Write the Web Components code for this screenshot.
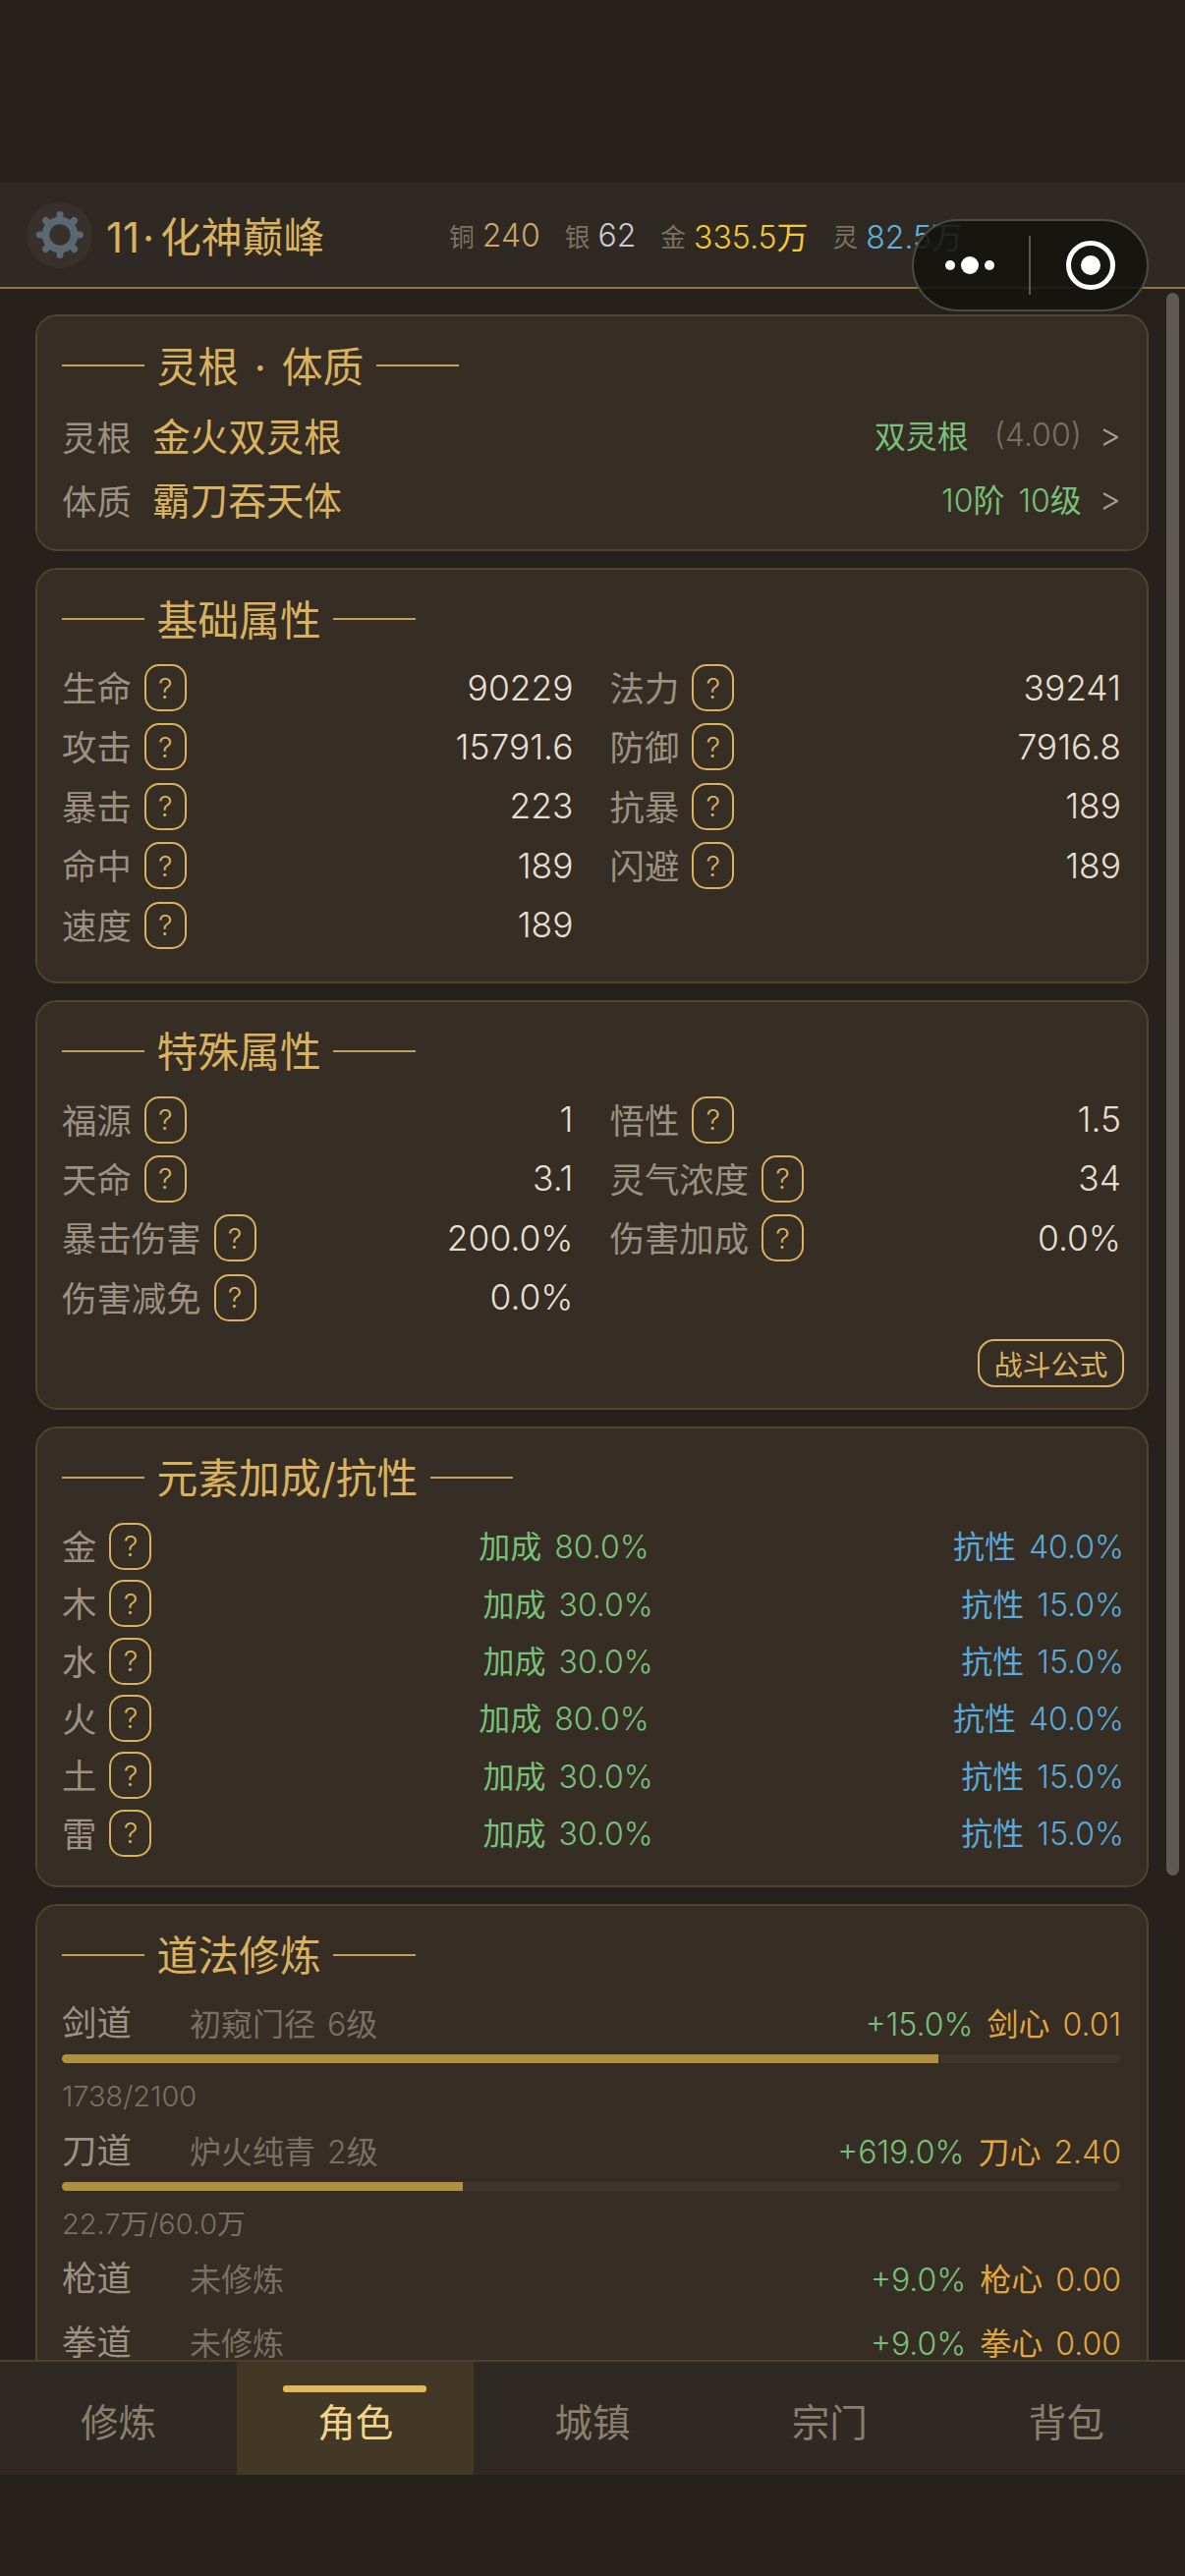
<!DOCTYPE html>
<html lang="zh">
<head>
<meta charset="utf-8">
<title>角色</title>
<style>
  html, body { margin: 0; padding: 0; background: #26211b; }
  body {
    width: 1206px; height: 2622px; overflow: hidden; position: relative;
    font-family: Inter, "Noto Sans CJK SC", sans-serif; font-weight: 400;
  }
  #page { display: flex; flex-direction: column; height: 2622px; padding-top: 186px; padding-bottom: 103px; box-sizing: border-box; }
  #content { flex: 1; min-height: 0; display: flex; flex-direction: column; gap: 17px; padding: 26px 37px 0 36px; }
  bottom-nav { position: relative; z-index: 1; }
</style>
</head>
<body>
<div id="page">
  <status-bar level="11" realm="化神巅峰">
    <coin-item label="铜" value="240" color="#c9a766"></coin-item>
    <coin-item label="银" value="62" color="#c9c9d2"></coin-item>
    <coin-item label="金" value="335.5万" color="#f3c933"></coin-item>
    <coin-item label="灵" value="82.5万" color="#5ab6dc"></coin-item>
  </status-bar>
  <div id="content">
    <stat-card title="灵根 · 体质" style="--pad-bottom:28px">
      <root-row label="灵根" value="金火双灵根" info="双灵根" extra="(4.00)"></root-row>
      <root-row label="体质" value="霸刀吞天体" info="10阶 10级"></root-row>
    </stat-card>
    <stat-card title="基础属性" style="--pad-bottom:33px">
      <stat-grid>
        <stat-row label="生命" value="90229"></stat-row>
        <stat-row label="法力" value="39241"></stat-row>
        <stat-row label="攻击" value="15791.6"></stat-row>
        <stat-row label="防御" value="7916.8"></stat-row>
        <stat-row label="暴击" value="223"></stat-row>
        <stat-row label="抗暴" value="189"></stat-row>
        <stat-row label="命中" value="189"></stat-row>
        <stat-row label="闪避" value="189"></stat-row>
        <stat-row label="速度" value="189"></stat-row>
      </stat-grid>
    </stat-card>
    <stat-card title="特殊属性" style="--pad-bottom:21px">
      <stat-grid>
        <stat-row label="福源" value="1"></stat-row>
        <stat-row label="悟性" value="1.5"></stat-row>
        <stat-row label="天命" value="3.1"></stat-row>
        <stat-row label="灵气浓度" value="34"></stat-row>
        <stat-row label="暴击伤害" value="200.0%"></stat-row>
        <stat-row label="伤害加成" value="0.0%"></stat-row>
        <stat-row label="伤害减免" value="0.0%"></stat-row>
      </stat-grid>
      <formula-button>战斗公式</formula-button>
    </stat-card>
    <stat-card title="元素加成/抗性" style="--pad-bottom:29px">
      <element-row label="金" bonus="80.0%" resist="40.0%"></element-row>
      <element-row label="木" bonus="30.0%" resist="15.0%"></element-row>
      <element-row label="水" bonus="30.0%" resist="15.0%"></element-row>
      <element-row label="火" bonus="80.0%" resist="40.0%"></element-row>
      <element-row label="土" bonus="30.0%" resist="15.0%"></element-row>
      <element-row label="雷" bonus="30.0%" resist="15.0%"></element-row>
    </stat-card>
    <stat-card title="道法修炼" style="--pad-bottom:34px">
      <dao-row label="剑道" rank="初窥门径 6级" bonus="+15.0%" heart="剑心" heart-value="0.01" percent="82.76" progress="1738/2100"></dao-row>
      <dao-row label="刀道" rank="炉火纯青 2级" bonus="+619.0%" heart="刀心" heart-value="2.40" percent="37.83" progress="22.7万/60.0万"></dao-row>
      <dao-row label="枪道" rank="未修炼" bonus="+9.0%" heart="枪心" heart-value="0.00"></dao-row>
      <dao-row label="拳道" rank="未修炼" bonus="+9.0%" heart="拳心" heart-value="0.00"></dao-row>
    </stat-card>
  </div>
  <bottom-nav active="1">
    <span>修炼</span><span>角色</span><span>城镇</span><span>宗门</span><span>背包</span>
  </bottom-nav>
</div>
<scroll-thumb></scroll-thumb>
<capsule-menu></capsule-menu>

<script>
const FONT = `Inter, "Noto Sans CJK SC", sans-serif`;

// digits are drawn lighter than the cjk text next to them
const NUM_CSS = `.n { font-weight: 330; }`;
const num = (text) => text.replace(/[\d.+%/()]+/g, (m) => `<span class="n">${m}</span>`);

class StatusBar extends HTMLElement {
    constructor() {
        super();
        this.shadowDOM = this.attachShadow({mode: "open"});
    }

    connectedCallback() {
        let teeth = "";
        for (let i = 0; i < 8; i++) {
            teeth += `<line x1="24" y1="6" x2="24" y2="3.5" transform="rotate(${i * 45} 24 24)"/>`;
        }
        this.shadowDOM.innerHTML = `
        <style>
        :host {
            display: flex;
            align-items: center;
            flex: none;
            height: 108px;
            box-sizing: border-box;
            padding-left: 27px;
            background: #2f2823;
            border-bottom: 2.5px solid #8f7541;
            font-family: ${FONT};
        }
        .gear {
            width: 67px;
            height: 67px;
            border-radius: 50%;
            background: #38302a;
            display: flex;
            align-items: center;
            justify-content: center;
            flex: none;
        }
        .name {
            margin-left: 14px;
            font-size: 41.8px;
            color: #d9b25f;
            white-space: nowrap;
        }
        .dot { margin: 0 6px 0 3px; }
        .coins {
            margin-left: auto;
            margin-right: 226px;
            display: flex;
            gap: 25px;
        }
        </style>
        <div class="gear">
            <svg width="48" height="48" viewBox="0 0 48 48" fill="none" stroke="#5b6771">
                <circle cx="24" cy="24" r="14.5" stroke-width="7.5"/>
                <g stroke-width="7" stroke-linecap="round">${teeth}</g>
            </svg>
        </div>
        <div class="name">${this.getAttribute("level")}<span class="dot">·</span>${this.getAttribute("realm")}</div>
        <div class="coins"><slot></slot></div>`;
    }
}
customElements.define("status-bar", StatusBar);

class CoinItem extends HTMLElement {
    constructor() {
        super();
        this.shadowDOM = this.attachShadow({mode: "open"});
    }

    connectedCallback() {
        this.shadowDOM.innerHTML = `
        <style>
        :host {
            display: inline-flex;
            align-items: center;
            gap: 8px;
            white-space: nowrap;
        }
        ${NUM_CSS}
        .label { font-size: 25.7px; color: #7d7262; }
        .value { font-size: 32px; color: ${this.getAttribute("color")}; }
        </style>
        <span class="label">${this.getAttribute("label")}</span>
        <span class="value">${num(this.getAttribute("value"))}</span>`;
    }
}
customElements.define("coin-item", CoinItem);

class StatCard extends HTMLElement {
    constructor() {
        super();
        this.shadowDOM = this.attachShadow({mode: "open"});
    }

    connectedCallback() {
        this.shadowDOM.innerHTML = `
        <style>
        :host {
            display: block;
            flex: none;
            box-sizing: border-box;
            background: #362d25;
            border: 2px solid #51432e;
            border-radius: 22px;
            padding: 24px 26px var(--pad-bottom, 24px) 25px;
            font-family: ${FONT};
        }
        .title {
            display: flex;
            align-items: center;
            gap: 12.5px;
            height: 52px;
            margin-bottom: 20px;
            color: #d9b25f;
            font-size: 41.8px;
            word-spacing: 4px;
            white-space: nowrap;
        }
        .title span { margin-bottom: 3px; }
        .title i {
            display: block;
            width: 84px;
            height: 2px;
            background: #c4a259;
        }
        </style>
        <div class="title"><i></i><span>${this.getAttribute("title")}</span><i></i></div>
        <slot></slot>`;
    }
}
customElements.define("stat-card", StatCard);

class HelpBadge extends HTMLElement {
    constructor() {
        super();
        this.attachShadow({mode: "open"}).innerHTML = `
        <style>
        :host {
            display: inline-flex;
            flex: none;
            align-items: center;
            justify-content: center;
            box-sizing: border-box;
            width: 43px;
            height: 48px;
            border: 2px solid #d9b25f;
            border-radius: 15px;
            color: #d9b25f;
            font-size: 29px;
            font-weight: 300;
            line-height: 1;
        }
        </style>?`;
    }
}
customElements.define("help-badge", HelpBadge);

class RootRow extends HTMLElement {
    constructor() {
        super();
        this.shadowDOM = this.attachShadow({mode: "open"});
    }

    connectedCallback() {
        const extra = this.getAttribute("extra");
        this.shadowDOM.innerHTML = `
        <style>
        :host {
            display: flex;
            align-items: center;
            height: 48px;
            margin-bottom: 17px;
            white-space: nowrap;
        }
        :host(:last-child) { margin-bottom: 0; }
        ${NUM_CSS}
        .label { font-size: 35.4px; color: #9c9182; width: 92px; margin-top: 2px; }
        .value { font-size: 38.6px; color: #d9b25f; }
        .info { margin-left: auto; font-size: 32px; color: #78c078; word-spacing: 5px; }
        .extra { margin-left: 26px; font-size: 32px; color: #7b7061; font-weight: 330; }
        .arrow { margin-left: 18px; font-size: 34px; color: #a89d8c; font-weight: 330; }
        </style>
        <span class="label">${this.getAttribute("label")}</span>
        <span class="value">${this.getAttribute("value")}</span>
        <span class="info">${num(this.getAttribute("info"))}</span>
        ${extra ? `<span class="extra">${extra}</span>` : ""}
        <span class="arrow">&gt;</span>`;
    }
}
customElements.define("root-row", RootRow);

class StatGrid extends HTMLElement {
    constructor() {
        super();
        this.attachShadow({mode: "open"}).innerHTML = `
        <style>
        :host {
            display: grid;
            grid-template-columns: 1fr 1fr;
            column-gap: 37px;
            row-gap: 12.4px;
        }
        </style>
        <slot></slot>`;
    }
}
customElements.define("stat-grid", StatGrid);

class StatRow extends HTMLElement {
    constructor() {
        super();
        this.shadowDOM = this.attachShadow({mode: "open"});
    }

    connectedCallback() {
        this.shadowDOM.innerHTML = `
        <style>
        :host {
            display: flex;
            align-items: center;
            height: 48px;
            white-space: nowrap;
            font-size: 35.4px;
        }
        .label { color: #9c9182; margin-right: 13px; margin-bottom: 3px; }
        .value { margin-left: auto; color: #e6dfd0; font-weight: 330; }
        </style>
        <span class="label">${this.getAttribute("label")}</span>
        <help-badge></help-badge>
        <span class="value">${this.getAttribute("value")}</span>`;
    }
}
customElements.define("stat-row", StatRow);

class FormulaButton extends HTMLElement {
    constructor() {
        super();
        this.attachShadow({mode: "open"}).innerHTML = `
        <style>
        :host {
            display: flex;
            align-items: center;
            justify-content: center;
            box-sizing: border-box;
            width: 149px;
            height: 49px;
            margin: 18px -3px 0 auto;
            border: 2px solid #d9b25f;
            border-radius: 17px;
            color: #d9b25f;
            font-size: 28.9px;
        }
        </style>
        <slot></slot>`;
    }
}
customElements.define("formula-button", FormulaButton);

class ElementRow extends HTMLElement {
    constructor() {
        super();
        this.shadowDOM = this.attachShadow({mode: "open"});
    }

    connectedCallback() {
        this.shadowDOM.innerHTML = `
        <style>
        :host {
            display: flex;
            align-items: center;
            justify-content: space-between;
            height: 48px;
            margin-bottom: 10.4px;
            margin-right: -3px;
            white-space: nowrap;
        }
        :host(:last-child) { margin-bottom: 0; }
        ${NUM_CSS}
        .left { display: flex; align-items: center; width: 115px; }
        .label { font-size: 35.4px; color: #9c9182; margin-right: 13px; margin-bottom: 3px; }
        .bonus { font-size: 32px; color: #78c078; word-spacing: 4px; margin-bottom: 3px; }
        .resist { font-size: 32px; color: #5aa9d8; word-spacing: 4px; margin-bottom: 3px; }
        </style>
        <div class="left">
            <span class="label">${this.getAttribute("label")}</span>
            <help-badge></help-badge>
        </div>
        <span class="bonus">${num("加成 " + this.getAttribute("bonus"))}</span>
        <span class="resist">${num("抗性 " + this.getAttribute("resist"))}</span>`;
    }
}
customElements.define("element-row", ElementRow);

class DaoRow extends HTMLElement {
    constructor() {
        super();
        this.shadowDOM = this.attachShadow({mode: "open"});
    }

    connectedCallback() {
        const percent = this.getAttribute("percent");
        const bar = percent ? `
        <div class="track"><div class="fill" style="width:${percent}%"></div></div>
        <div class="progress">${num(this.getAttribute("progress"))}</div>` : "";
        this.shadowDOM.innerHTML = `
        <style>
        :host {
            display: block;
            margin-bottom: 17px;
            white-space: nowrap;
        }
        ${NUM_CSS}
        /* baseline so the latin-only spans sit level with the cjk ones */
        .head { display: flex; align-items: baseline; height: 48px; box-sizing: border-box; padding-top: 6px; line-height: 1; }
        .label { font-size: 35.4px; color: #9c9182; width: 130px; }
        .rank { font-size: 32px; color: #7b7061; word-spacing: 3px; }
        .bonus { margin-left: auto; font-size: 32px; color: #78c078; }
        .heart { margin-left: 14px; font-size: 32px; color: #e0a63f; word-spacing: 4px; }
        .track { height: 9.5px; margin-top: 7px; background: #3f342a; border-radius: 5px; overflow: hidden; }
        .fill { height: 100%; background: #b08f3f; }
        .progress { height: 29.5px; line-height: 29.5px; margin-top: 19px; font-size: 28.9px; color: #7b7061; }
        </style>
        <div class="head">
            <span class="label">${this.getAttribute("label")}</span>
            <span class="rank">${num(this.getAttribute("rank"))}</span>
            <span class="bonus n">${this.getAttribute("bonus")}</span>
            <span class="heart">${num(this.getAttribute("heart") + " " + this.getAttribute("heart-value"))}</span>
        </div>${bar}`;
    }
}
customElements.define("dao-row", DaoRow);

class BottomNav extends HTMLElement {
    constructor() {
        super();
        this.shadowDOM = this.attachShadow({mode: "open"});
    }

    connectedCallback() {
        const active = Number(this.getAttribute("active"));
        const tabs = [...this.querySelectorAll("span")].map((tab, i) =>
            `<div class="tab${i === active ? " on" : ""}">${tab.textContent}</div>`).join("");
        this.shadowDOM.innerHTML = `
        <style>
        :host {
            display: flex;
            flex: none;
            height: 117px;
            box-sizing: border-box;
            background: #2f2823;
            border-top: 2px solid #4d3f2b;
            font-family: ${FONT};
        }
        .tab {
            flex: 1;
            position: relative;
            display: flex;
            align-items: center;
            justify-content: center;
            padding-top: 2px;
            font-size: 38.6px;
            color: #8a7f6e;
        }
        .tab.on { background: #433725; color: #f0d48a; }
        .tab.on::before {
            content: "";
            position: absolute;
            left: 47px;
            right: 48px;
            top: 24px;
            height: 7px;
            border-radius: 3px;
            background: #dfb75f;
        }
        </style>
        ${tabs}`;
    }
}
customElements.define("bottom-nav", BottomNav);

class ScrollThumb extends HTMLElement {
    constructor() {
        super();
        this.attachShadow({mode: "open"}).innerHTML = `
        <style>
        :host {
            position: absolute;
            left: 1187px;
            top: 298px;
            width: 13px;
            height: 1611px;
            border-radius: 7px;
            background: #5d5955;
        }
        </style>`;
    }
}
customElements.define("scroll-thumb", ScrollThumb);

class CapsuleMenu extends HTMLElement {
    constructor() {
        super();
        this.attachShadow({mode: "open"}).innerHTML = `
        <style>
        :host {
            position: absolute;
            left: 928px;
            top: 223px;
            width: 241px;
            height: 94px;
        }
        svg { display: block; }
        </style>
        <svg width="241" height="94" viewBox="0 0 241 94">
            <rect x="1" y="1" width="239" height="92" rx="46" fill="#15120e" fill-opacity=".88" stroke="#4d4a46" stroke-width="2"/>
            <circle cx="39" cy="47" r="5" fill="#fff"/>
            <circle cx="59" cy="47" r="9" fill="#fff"/>
            <circle cx="79" cy="47" r="5" fill="#fff"/>
            <rect x="119" y="17" width="2" height="60" fill="#5a5651"/>
            <circle cx="182" cy="47" r="22.5" fill="none" stroke="#fff" stroke-width="5"/>
            <circle cx="182" cy="47" r="10" fill="#fff"/>
        </svg>`;
    }
}
customElements.define("capsule-menu", CapsuleMenu);
</script>
</body>
</html>
